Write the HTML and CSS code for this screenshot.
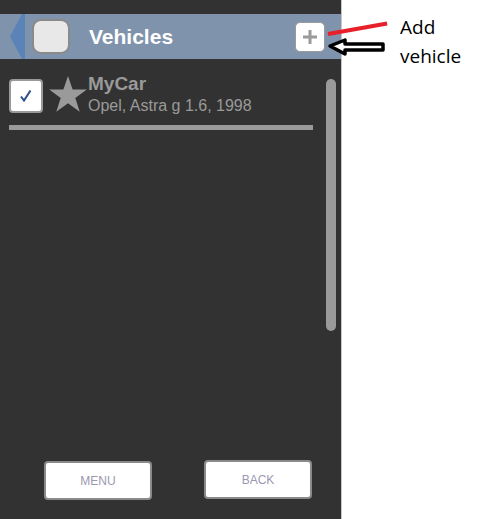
FILE: index.html
```html
<!DOCTYPE html>
<html>
<head>
<meta charset="utf-8" />
<title>Vehicles</title>
<link rel="stylesheet" href="styles.css">
</head>
<body>

<div class="screen">
	<div class="header">
		<div class="backArrow"></div>
		<div class="headerBox"></div>
		<div class="title">Vehicles</div>
		<button class="addButton">
			<svg viewBox="0 0 16 16" width="16" height="16">
				<path d="M6.5 1h3v5.5H15v3H9.5V15h-3V9.5H1v-3h5.5z" fill="#9a9a9a"/>
			</svg>
		</button>
	</div>

	<div class="listArea">
		<div class="list">
			<div class="vehicle">
				<div class="check">
					<svg viewBox="0 0 16 16" width="16" height="16">
						<path d="M3 8.5l3 4 6.5-10" fill="none" stroke="#2d4f86" stroke-width="2"/>
					</svg>
				</div>
				<svg class="star" viewBox="0 0 40 40" width="40" height="40">
					<path d="M20 1l4.6 13.6h14.2l-11.5 8.4 4.4 13.7L20 28.3 8.3 36.7l4.4-13.7L1.2 14.6h14.2z" fill="#9a9a9a"/>
				</svg>
				<div class="info">
					<div class="name">MyCar</div>
					<div class="desc">Opel, Astra g 1.6, 1998</div>
				</div>
			</div>
			<div class="divider"></div>
		</div>
		<div class="scrollbar"></div>
	</div>

	<div class="footer">
		<button class="navButton menu">MENU</button>
		<button class="navButton back">BACK</button>
	</div>
</div>

<div class="notes">
	<div class="redLine"></div>
	<svg class="arrow" viewBox="0 0 60 20" width="60" height="20">
		<path d="M3 9L18 3v4h38v6H18v4z" fill="#fff" stroke="#000" stroke-width="3.5" stroke-linejoin="round"/>
	</svg>
	<div class="noteText">Add<br>vehicle</div>
</div>

</body>
</html>
```

FILE: styles.css
```css
html, body {
	margin: 0;
	padding: 0;
	width: 100%;
	height: 100%;
	background: #fff;
}

body {
	display: flex;
	position: relative;
}

.screen {
	width: 341px;
	height: 519px;
	background: #323232;
	border-right: 1px solid #c8c8c8;
	display: flex;
	flex-direction: column;
	font-family: "Liberation Sans", Arial, sans-serif;
}

.header {
	margin-top: 14px;
	height: 45px;
	background: #7f93ad;
	display: flex;
	align-items: center;
	position: relative;
}

.backArrow {
	width: 15px;
	height: 45px;
	margin-left: 10px;
	background: #5a84b8;
	clip-path: polygon(12px 0, 100% 0, 100% 100%, 12px 100%, 0 50%);
}

.headerBox {
	width: 34px;
	height: 31px;
	margin-left: 7px;
	background: #e8e8e8;
	border: 2px solid #8a8a8a;
	border-radius: 9px;
}

.title {
	margin-left: 19px;
	color: #fff;
	font-size: 21px;
	font-weight: bold;
	flex: 1;
}

.addButton {
	width: 30px;
	height: 30px;
	margin-right: 16px;
	padding: 0;
	background: #fff;
	border: 1px solid #9a9a9a;
	border-radius: 5px;
	display: flex;
	align-items: center;
	justify-content: center;
}

.listArea {
	flex: 1;
	display: flex;
	padding-top: 14px;
}

.list {
	flex: 1;
	padding-left: 9px;
}

.vehicle {
	display: flex;
	align-items: flex-start;
}

.check {
	width: 30px;
	height: 30px;
	margin-top: 6px;
	background: #fff;
	border: 2px solid #9a9a9a;
	border-radius: 4px;
	display: flex;
	align-items: center;
	justify-content: center;
}

.star {
	margin-left: 5px;
	margin-top: 2px;
}

.info {
	margin-left: 0;
	color: #9a9a9a;
}

.name {
	font-size: 19px;
	font-weight: bold;
	line-height: 22px;
}

.desc {
	font-size: 16px;
	line-height: 22px;
}

.divider {
	width: 304px;
	height: 5px;
	margin-top: 8px;
	background: #9a9a9a;
}

.scrollbar {
	width: 10px;
	height: 252px;
	margin: 6px 5px 0 0;
	background: #9a9a9a;
	border-radius: 5px;
}

.footer {
	display: flex;
	justify-content: space-between;
	padding: 0 29px 19px 44px;
}

.navButton {
	width: 108px;
	height: 39px;
	background: #fff;
	border: 2px solid #8a8a8a;
	border-radius: 4px;
	color: #9a98b0;
	font-family: "Liberation Sans", Arial, sans-serif;
	font-size: 12px;
}

.back {
	margin-top: -1px;
	margin-bottom: 1px;
}

.notes {
	flex: 1;
	padding: 13px 0 0 58px;
}

.noteText {
	font-family: "Open Sans", "DejaVu Sans", sans-serif;
	font-size: 19px;
	line-height: 29px;
	color: #000;
}

.redLine {
	position: absolute;
	left: 328px;
	top: 32px;
	width: 60px;
	height: 4px;
	background: #e8202a;
	transform: rotate(-10deg);
	transform-origin: left center;
}

.arrow {
	position: absolute;
	left: 327px;
	top: 37px;
}
```
